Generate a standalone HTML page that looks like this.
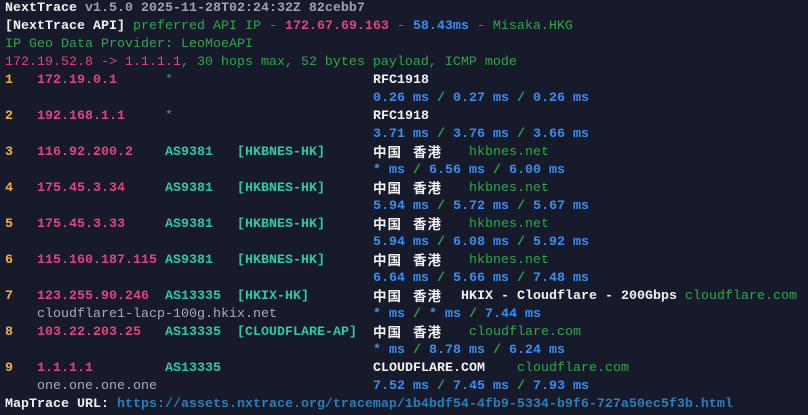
<!DOCTYPE html>
<html><head><meta charset="utf-8"><style>
html,body{margin:0;padding:0;background:#161a2b;}
body{width:808px;height:415px;overflow:hidden;font-family:"Liberation Mono","Noto Sans CJK SC",monospace;font-size:13.33px;}
.r{position:relative;height:18px;line-height:18px;white-space:pre;}
.r span{position:absolute;top:0;}
.b{font-weight:bold}
.w{color:#f2f2f2;font-weight:bold}
.g{color:#9ba3b4}
.gr{color:#2ea84a}
.pk{color:#e0457b}
.pkb{color:#e0457b;font-weight:bold}
.o{color:#f5b041;font-weight:bold}
.c{color:#2fc8a8;font-weight:bold}
.bl{color:#3a8ef0;font-weight:bold}
.hn{color:#a9adb8}
.u{color:#2a7fb8;font-weight:bold}
.r span.cj{color:#f2f2f2;font-weight:bold;font-family:"Noto Sans CJK SC",sans-serif;letter-spacing:1px;font-size:13.5px;line-height:18px;top:-2px}
</style></head><body>
<div class="r"><span style="left:5px"><b class="w">NextTrace</b> <b class="g">v1.5.0 2025-11-28T02:24:32Z 82cebb7</b></span></div>
<div class="r"><span style="left:5px"><b class="w">[NextTrace API]</b> <span style="position:static" class="gr">preferred API IP - </span><b class="pk">172.67.69.163</b><span style="position:static" class="gr"> - </span><b class="bl">58.43ms</b><span style="position:static" class="gr"> - Misaka.HKG</span></span></div>
<div class="r"><span style="left:5px" class="gr">IP Geo Data Provider: LeoMoeAPI</span></div>
<div class="r"><span style="left:5px"><span style="position:static" class="pk">172.19.52.8 -&gt; 1.1.1.1</span><span style="position:static" class="gr">, 30 hops max, 52 bytes payload, ICMP mode</span></span></div>

<div class="r"><span class="o" style="left:5px">1</span><span class="pkb" style="left:37px">172.19.0.1</span><span class="gr" style="left:165px">*</span><span class="w" style="left:373px">RFC1918</span></div>
<div class="r"><span class="bl" style="left:373px">0.26 ms <i class="gr" style="font-style:normal">/</i> 0.27 ms <i class="gr" style="font-style:normal">/</i> 0.26 ms</span></div>
<div class="r"><span class="o" style="left:5px">2</span><span class="pkb" style="left:37px">192.168.1.1</span><span class="gr" style="left:165px">*</span><span class="w" style="left:373px">RFC1918</span></div>
<div class="r"><span class="bl" style="left:373px">3.71 ms <i class="gr" style="font-style:normal">/</i> 3.76 ms <i class="gr" style="font-style:normal">/</i> 3.66 ms</span></div>

<div class="r"><span class="o" style="left:5px">3</span><span class="pkb" style="left:37px">116.92.200.2</span><span class="c" style="left:165px">AS9381</span><span class="c" style="left:237px">[HKBNES-HK]</span><span class="cj" style="left:373px">中国</span><span class="cj" style="left:413px">香港</span><span class="gr" style="left:469px">hkbnes.net</span></div>
<div class="r"><span class="bl" style="left:373px">* ms <i class="gr" style="font-style:normal">/</i> 6.56 ms <i class="gr" style="font-style:normal">/</i> 6.00 ms</span></div>
<div class="r"><span class="o" style="left:5px">4</span><span class="pkb" style="left:37px">175.45.3.34</span><span class="c" style="left:165px">AS9381</span><span class="c" style="left:237px">[HKBNES-HK]</span><span class="cj" style="left:373px">中国</span><span class="cj" style="left:413px">香港</span><span class="gr" style="left:469px">hkbnes.net</span></div>
<div class="r"><span class="bl" style="left:373px">5.94 ms <i class="gr" style="font-style:normal">/</i> 5.72 ms <i class="gr" style="font-style:normal">/</i> 5.67 ms</span></div>
<div class="r"><span class="o" style="left:5px">5</span><span class="pkb" style="left:37px">175.45.3.33</span><span class="c" style="left:165px">AS9381</span><span class="c" style="left:237px">[HKBNES-HK]</span><span class="cj" style="left:373px">中国</span><span class="cj" style="left:413px">香港</span><span class="gr" style="left:469px">hkbnes.net</span></div>
<div class="r"><span class="bl" style="left:373px">5.94 ms <i class="gr" style="font-style:normal">/</i> 6.08 ms <i class="gr" style="font-style:normal">/</i> 5.92 ms</span></div>
<div class="r"><span class="o" style="left:5px">6</span><span class="pkb" style="left:37px">115.160.187.115</span><span class="c" style="left:165px">AS9381</span><span class="c" style="left:237px">[HKBNES-HK]</span><span class="cj" style="left:373px">中国</span><span class="cj" style="left:413px">香港</span><span class="gr" style="left:469px">hkbnes.net</span></div>
<div class="r"><span class="bl" style="left:373px">6.64 ms <i class="gr" style="font-style:normal">/</i> 5.66 ms <i class="gr" style="font-style:normal">/</i> 7.48 ms</span></div>

<div class="r"><span class="o" style="left:5px">7</span><span class="pkb" style="left:37px">123.255.90.246</span><span class="c" style="left:165px">AS13335</span><span class="c" style="left:237px">[HKIX-HK]</span><span class="cj" style="left:373px">中国</span><span class="cj" style="left:413px">香港</span><span class="w" style="left:461px">HKIX - Cloudflare - 200Gbps</span><span class="gr" style="left:685px">cloudflare.com</span></div>
<div class="r"><span class="hn" style="left:37px">cloudflare1-lacp-100g.hkix.net</span><span class="bl" style="left:373px">* ms <i class="gr" style="font-style:normal">/</i> * ms <i class="gr" style="font-style:normal">/</i> 7.44 ms</span></div>
<div class="r"><span class="o" style="left:5px">8</span><span class="pkb" style="left:37px">103.22.203.25</span><span class="c" style="left:165px">AS13335</span><span class="c" style="left:237px">[CLOUDFLARE-AP]</span><span class="cj" style="left:373px">中国</span><span class="cj" style="left:413px">香港</span><span class="gr" style="left:469px">cloudflare.com</span></div>
<div class="r"><span class="bl" style="left:373px">* ms <i class="gr" style="font-style:normal">/</i> 8.78 ms <i class="gr" style="font-style:normal">/</i> 6.24 ms</span></div>
<div class="r"><span class="o" style="left:5px">9</span><span class="pkb" style="left:37px">1.1.1.1</span><span class="c" style="left:165px">AS13335</span><span class="w" style="left:373px">CLOUDFLARE.COM</span><span class="gr" style="left:517px">cloudflare.com</span></div>
<div class="r"><span class="hn" style="left:37px">one.one.one.one</span><span class="bl" style="left:373px">7.52 ms <i class="gr" style="font-style:normal">/</i> 7.45 ms <i class="gr" style="font-style:normal">/</i> 7.93 ms</span></div>
<div class="r"><span style="left:5px"><b class="w">MapTrace URL: </b><b class="u">https://assets.nxtrace.org/tracemap/1b4bdf54-4fb9-5334-b9f6-727a50ec5f3b.html</b></span></div>
</body></html>
